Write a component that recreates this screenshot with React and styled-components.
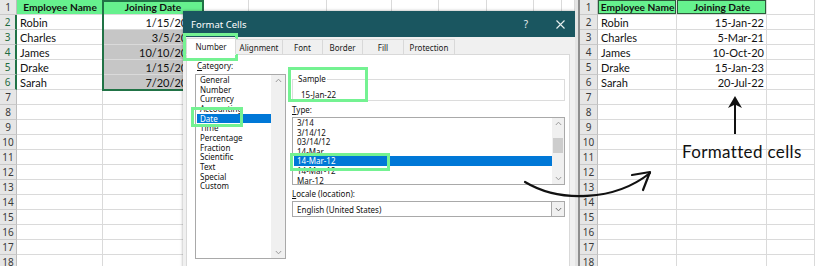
import React from "react";
import styled, { createGlobalStyle, css } from "styled-components";

const Global = createGlobalStyle`
  html, body { margin: 0; padding: 0; background: #fff; }
  body { width: 815px; height: 266px; overflow: hidden; font-family: Lato, "Liberation Sans", sans-serif; }
  * { box-sizing: border-box; }
`;

const Root = styled.div`
  position: relative;
  display: flex;
  width: 815px;
  height: 266px;
  overflow: hidden;
  background: #fff;
`;

const Pane = styled.div`
  position: relative;
  flex: ${(p) => (p.$width ? `0 0 ${p.$width}px` : "1 1 auto")};
  height: 266px;
  overflow: hidden;
`;

const Divider = styled.div`
  flex: 0 0 5px;
  background: #e4e4e4;
  border-right: 2px solid #8e8e8e;
`;

const Grid = styled.div`
  display: grid;
  grid-template-columns: ${(p) => p.$cols};
  grid-auto-rows: 15px;
`;

const RowHead = styled.div`
  background: #e6e6e6;
  border-bottom: 1px solid #c9c9c9;
  border-right: ${(p) => (p.$active ? "2px solid #217346" : "1px solid #bdbdbd")};
  color: ${(p) => (p.$active ? "#1f6b40" : "#3a3a3a")};
  font-family: "Noto Sans", "Open Sans", sans-serif;
  font-size: 10px;
  display: flex;
  align-items: center;
  justify-content: center;
`;

const Cell = styled.div`
  border-right: 1px solid #dadada;
  border-bottom: 1px solid #dadada;
  background: ${(p) => p.$fill || "#fff"};
  color: #111;
  font-size: ${(p) => (p.$bold ? "10.2px" : "11px")};
  font-weight: ${(p) => (p.$bold ? 700 : 400)};
  display: flex;
  align-items: center;
  justify-content: ${(p) =>
    p.$align === "right" ? "flex-end" : p.$align === "center" ? "center" : "flex-start"};
  padding: 0 2px 0 3px;
  white-space: nowrap;
  overflow: hidden;
  ${(p) =>
    p.$boxed &&
    css`
      box-shadow: inset 0 0 0 1px #2c5a3a;
    `}
`;

const Selection = styled.div`
  position: absolute;
  left: 102px;
  top: 0;
  width: 102px;
  height: 91px;
  border: 2px solid #217346;
  pointer-events: none;
`;

/* ---------- dialog ---------- */
const Dialog = styled.div`
  position: absolute;
  left: 183px;
  top: 11px;
  width: 392px;
  height: 270px;
  background: #f0f0f0;
  box-shadow: 0 0 3px rgba(0, 0, 0, 0.35);
  font-family: "Noto Sans", "Open Sans", sans-serif;
  font-size: 8px;
  font-variant-ligatures: none;
  color: #111;
  display: flex;
  flex-direction: column;
`;

const TitleBar = styled.div`
  flex: 0 0 26px;
  background: #1a5660;
  color: #fff;
  display: flex;
  align-items: center;
  padding: 0 0 0 8px;
  font-size: 9.5px;
`;

const Title = styled.span`
  flex: 1;
`;

const TitleButton = styled.span`
  width: ${(p) => p.$w}px;
  display: flex;
  justify-content: center;
  align-items: center;
  font-size: 10px;
  color: #e8f0f0;
`;

const TabStrip = styled.div`
  display: flex;
  align-items: flex-end;
  height: 17px;
  padding-left: 3px;
  position: relative;
  z-index: 1;
`;

const Tab = styled.div`
  width: ${(p) => p.$w}px;
  height: ${(p) => (p.$active ? 17 : 15)}px;
  display: flex;
  align-items: center;
  justify-content: center;
  color: #1a1a1a;
  background: ${(p) => (p.$active ? "#fff" : "#f0f0f0")};
  border: 1px solid #d9d9d9;
  border-bottom: ${(p) => (p.$active ? "1px solid #fff" : "none")};
  margin-right: -1px;
  margin-bottom: ${(p) => (p.$active ? -1 : 0)}px;
`;

const Panel = styled.div`
  margin: 0 5px 0 3px;
  flex: 1;
  background: #fff;
  border: 1px solid #d9d9d9;
  padding: 5px 4px 0 8px;
  display: grid;
  grid-template-columns: 91px 273px;
  column-gap: 6px;
  align-items: start;
`;

const Column = styled.div`
  display: flex;
  flex-direction: column;
`;

const Label = styled.div`
  line-height: 12px;
  margin-top: ${(p) => p.$mt || 0}px;
  padding-left: ${(p) => p.$pl || 0}px;
  u { text-decoration: underline; }
`;

const ListBox = styled.div`
  margin-top: ${(p) => p.$mt || 0}px;
  height: ${(p) => p.$h}px;
  border: 1px solid #a9a9a9;
  background: #fff;
  display: flex;
`;

const Items = styled.div`
  flex: 1;
  padding-left: ${(p) => p.$pl || 1}px;
  overflow: hidden;
`;

const Item = styled.div`
  height: ${(p) => p.$lh}px;
  line-height: ${(p) => p.$lh}px;
  padding-left: 3px;
  white-space: nowrap;
  ${(p) =>
    p.$selected &&
    css`
      background: #0078d7;
      color: #fff;
    `}
`;

const Scrollbar = styled.div`
  flex: 0 0 ${(p) => p.$w}px;
  background: #f0f0f0;
  position: relative;
  display: flex;
  flex-direction: column;
  align-items: center;
  justify-content: space-between;
  padding: 3px 0;
`;

const Thumb = styled.div`
  position: absolute;
  left: 1px;
  right: 1px;
  top: ${(p) => p.$top}px;
  height: ${(p) => p.$h}px;
  background: #cdcdcd;
`;

const GroupBox = styled.fieldset`
  margin: 14px 0 0 0;
  padding: 0 8px 0 8px;
  border: 1px solid #dcdcdc;
  min-inline-size: 0;
`;

const Legend = styled.legend`
  padding: 0 1px;
  margin-left: -4px;
  line-height: 10px;
  font-size: 8px;
`;

const SampleValue = styled.div`
  line-height: 10px;
  margin-top: 6px;
`;

const Combo = styled.div`
  margin-top: 1px;
  height: 16px;
  border: 1px solid #a9a9a9;
  background: #fff;
  display: flex;
  align-items: center;
  padding-left: 4px;
`;

const ComboText = styled.span`
  flex: 1;
`;

const ComboButton = styled.div`
  width: 13px;
  height: 14px;
  border-left: 1px solid #a9a9a9;
  background: #f0f0f0;
  display: flex;
  align-items: center;
  justify-content: center;
`;

/* ---------- annotations ---------- */
const Highlight = styled.div`
  position: absolute;
  left: ${(p) => p.$x}px;
  top: ${(p) => p.$y}px;
  width: ${(p) => p.$w}px;
  height: ${(p) => p.$h}px;
  border: 3px solid #74f292;
  pointer-events: none;
`;

const Overlay = styled.svg`
  position: absolute;
  left: 0;
  top: 0;
  pointer-events: none;
`;

const Caption = styled.div`
  position: absolute;
  left: 682px;
  top: 141px;
  font-family: Lato, "Liberation Sans", sans-serif;
  font-size: 17px;
  letter-spacing: 0.35px;
  color: #111;
  white-space: nowrap;
`;

const Chevron = ({ up, color = "#9a9a9a" }) => (
  <svg width="7" height="5" viewBox="0 0 7 5">
    <polyline
      points={up ? "0.8,4 3.5,1.2 6.2,4" : "0.8,1 3.5,3.8 6.2,1"}
      fill="none"
      stroke={color}
      strokeWidth="1"
    />
  </svg>
);

const CloseIcon = () => (
  <svg width="9" height="9" viewBox="0 0 9 9">
    <path d="M0.5 0.5 L8.5 8.5 M8.5 0.5 L0.5 8.5" stroke="#e8f0f0" strokeWidth="1.1" />
  </svg>
);

const ROWS = 18;

function Sheet({ cols, data, activeRows = [] }) {
  const cells = [];
  for (let r = 0; r < ROWS; r++) {
    const row = data[r] || [];
    cells.push(
      <RowHead key={`h${r}`} $active={activeRows.includes(r + 1)}>
        {r + 1}
      </RowHead>
    );
    for (let c = 0; c < cols.length - 1; c++) {
      const d = row[c] || {};
      cells.push(
        <Cell
          key={`${r}-${c}`}
          $fill={d.fill}
          $bold={d.bold}
          $align={d.align}
          $boxed={d.boxed}
        >
          {d.t || ""}
        </Cell>
      );
    }
  }
  return <Grid $cols={cols.map((w) => (w === "fr" ? "1fr" : `${w}px`)).join(" ")}>{cells}</Grid>;
}

const GREEN = "#66f18e";
const SEL = "#c6c6c6";

const leftData = [
  [
    { t: "Employee Name", bold: true, align: "center", fill: GREEN },
    { t: "Joining Date", bold: true, align: "center", fill: GREEN },
  ],
  [{ t: "Robin" }, { t: "1/15/2022", align: "right" }],
  [{ t: "Charles" }, { t: "3/5/2021", align: "right", fill: SEL }],
  [{ t: "James" }, { t: "10/10/2020", align: "right", fill: SEL }],
  [{ t: "Drake" }, { t: "1/15/2023", align: "right", fill: SEL }],
  [{ t: "Sarah" }, { t: "7/20/2022", align: "right", fill: SEL }],
];

const rightData = [
  [
    { t: "Employee Name", bold: true, align: "center", fill: GREEN, boxed: true },
    { t: "Joining Date", bold: true, align: "center", fill: GREEN, boxed: true },
  ],
  [{ t: "Robin" }, { t: "15-Jan-22", align: "right" }],
  [{ t: "Charles" }, { t: "5-Mar-21", align: "right" }],
  [{ t: "James" }, { t: "10-Oct-20", align: "right" }],
  [{ t: "Drake" }, { t: "15-Jan-23", align: "right" }],
  [{ t: "Sarah" }, { t: "20-Jul-22", align: "right" }],
];

const categories = [
  "General",
  "Number",
  "Currency",
  "Accounting",
  "Date",
  "Time",
  "Percentage",
  "Fraction",
  "Scientific",
  "Text",
  "Special",
  "Custom",
];

const types = ["3/14", "3/14/12", "03/14/12", "14-Mar", "14-Mar-12", "14-Mar-12", "Mar-12"];

const tabs = [
  ["Number", 50],
  ["Alignment", 48],
  ["Font", 41],
  ["Border", 41],
  ["Fill", 42],
  ["Protection", 52],
];

export default function App() {
  return (
    <>
      <Global />
      <Root>
        <Pane $width={575}>
          <Sheet
            cols={[17, 86, 100, 46, 78, 65, 47, 48, 47, 28, "fr"]}
            data={leftData}
            activeRows={[2, 3, 4, 5, 6]}
          />
          <Selection />
          <Dialog>
            <TitleBar>
              <Title>Format Cells</Title>
              <TitleButton $w={38}>?</TitleButton>
              <TitleButton $w={30}>
                <CloseIcon />
              </TitleButton>
            </TitleBar>
            <TabStrip>
              {tabs.map(([t, w], i) => (
                <Tab key={t} $w={w} $active={i === 0}>
                  {t}
                </Tab>
              ))}
            </TabStrip>
            <Panel>
              <Column>
                <Label $pl={2}>
                  <u>C</u>ategory:
                </Label>
                <ListBox $mt={2} $h={185}>
                  <Items>
                    {categories.map((c) => (
                      <Item key={c} $lh={9.67} $selected={c === "Date"}>
                        {c}
                      </Item>
                    ))}
                  </Items>
                  <Scrollbar $w={14}>
                    <Chevron up />
                    <Chevron />
                  </Scrollbar>
                </ListBox>
              </Column>
              <Column>
                <GroupBox>
                  <Legend>Sample</Legend>
                  <SampleValue>15-Jan-22</SampleValue>
                </GroupBox>
                <Label $mt={3}>
                  <u>T</u>ype:
                </Label>
                <ListBox $mt={1} $h={68}>
                  <Items $pl={1}>
                    {types.map((t, i) => (
                      <Item key={i} $lh={9.6} $selected={i === 4}>
                        {t}
                      </Item>
                    ))}
                  </Items>
                  <Scrollbar $w={12}>
                    <Chevron up />
                    <Thumb $top={20} $h={15} />
                    <Chevron />
                  </Scrollbar>
                </ListBox>
                <Label $mt={3}>
                  <u>L</u>ocale (location):
                </Label>
                <Combo>
                  <ComboText>English (United States)</ComboText>
                  <ComboButton>
                    <Chevron color="#707070" />
                  </ComboButton>
                </Combo>
              </Column>
            </Panel>
          </Dialog>
        </Pane>
        <Divider />
        <Pane>
          <Sheet cols={[18, 79, 90, "fr"]} data={rightData} />
        </Pane>

        <Highlight $x={183} $y={33} $w={55} $h={28} />
        <Highlight $x={288} $y={67} $w={80} $h={35} />
        <Highlight $x={191} $y={107} $w={52} $h={20} />
        <Highlight $x={290} $y={153} $w={100} $h={18} />

        <Overlay width="815" height="266" viewBox="0 0 815 266">
          <path
            d="M525 182 C560 203 615 201 650 173"
            fill="none"
            stroke="#111"
            strokeWidth="2.2"
            strokeLinecap="round"
          />
          <polyline
            points="632,175 650,172 643,190"
            fill="none"
            stroke="#111"
            strokeWidth="2.2"
            strokeLinecap="round"
            strokeLinejoin="round"
          />
          <line x1="735" y1="134" x2="735" y2="104" stroke="#111" strokeWidth="2" />
          <path d="M735 96 L742 108 L735 104.5 L728 108 Z" fill="#111" />
        </Overlay>
        <Caption>Formatted cells</Caption>
      </Root>
    </>
  );
}
